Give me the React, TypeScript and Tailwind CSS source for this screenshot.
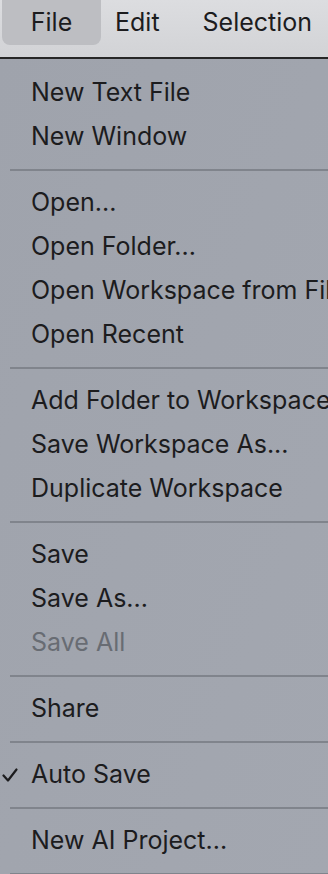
import React from 'react'

type Entry = { label?: string; sep?: boolean; disabled?: boolean; checked?: boolean }

const entries: Entry[] = [
  { label: 'New Text File' },
  { label: 'New Window' },
  { sep: true },
  { label: 'Open...' },
  { label: 'Open Folder...' },
  { label: 'Open Workspace from File...' },
  { label: 'Open Recent' },
  { sep: true },
  { label: 'Add Folder to Workspace...' },
  { label: 'Save Workspace As...' },
  { label: 'Duplicate Workspace' },
  { sep: true },
  { label: 'Save' },
  { label: 'Save As...' },
  { label: 'Save All', disabled: true },
  { sep: true },
  { label: 'Share' },
  { sep: true },
  { label: 'Auto Save', checked: true },
  { sep: true },
  { label: 'New AI Project...' },
  { sep: true },
]

const App: React.FC = () => {
  return (
    <div className="w-[328px] h-[874px] overflow-hidden bg-[#9ea2ab] font-['Inter',sans-serif] text-[25px] text-[#1c1c1e]">
      <div className="h-[57px] bg-gradient-to-b from-[#dcdde0] to-[#d2d3d6] flex flex-row items-start whitespace-nowrap">
        <div className="ml-[2px] w-[99px] h-[45px] rounded-b-[8px] bg-[#bdbec2] flex items-center justify-center">File</div>
        <div className="ml-[14px] h-[45px] flex items-center">Edit</div>
        <div className="ml-[43px] h-[45px] flex items-center">Selection</div>
      </div>
      <div className="h-[2px] bg-[#262626]" />
      <div className="pt-[12px] bg-gradient-to-br from-[#9fa3ac] to-[#a3a7b0]">
        {entries.map((e, i) =>
          e.sep ? (
            <div key={i} className="h-[22px] flex items-center pl-[10px]">
              <div className="h-[2px] w-full bg-[#80848c]" />
            </div>
          ) : (
            <div key={i} className={'relative h-[44px] flex items-center pl-[31px] whitespace-nowrap overflow-hidden ' + (e.disabled ? 'text-[#686c73]' : '')}>
              {e.checked && (
                <svg className="absolute left-[2px] top-[15px]" width="16" height="14" viewBox="0 0 16 14" fill="none">
                  <path d="M1.5 7.5 L6 12.5 L14.5 1.5" stroke="#1c1c1e" strokeWidth="2.2" strokeLinecap="round" strokeLinejoin="round" />
                </svg>
              )}
              {e.label}
            </div>
          )
        )}
      </div>
    </div>
  )
}

export default App
